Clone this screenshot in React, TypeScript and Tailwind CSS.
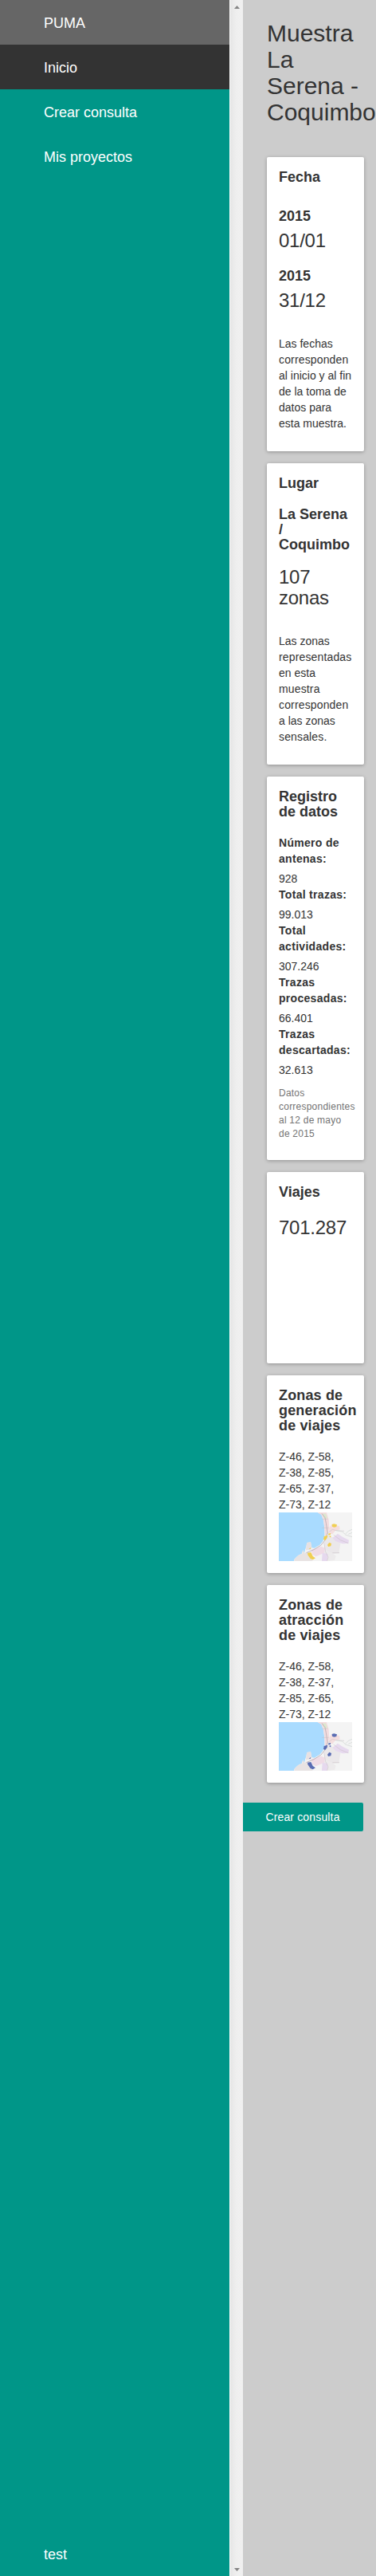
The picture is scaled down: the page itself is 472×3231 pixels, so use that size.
import React from "react";

type LineProps = { children: React.ReactNode; className?: string };

const Line = ({ children, className = "" }: LineProps) => (
  <span className={`block whitespace-nowrap ${className}`}>{children}</span>
);

const Card = ({ children, className = "" }: LineProps) => (
  <section
    className={`w-[122px] rounded-[2px] bg-white p-[15px] shadow-[0_1px_4px_rgba(0,0,0,0.3)] ${className}`}
  >
    {children}
  </section>
);

const Heading = ({ lines, className = "" }: { lines: string[]; className?: string }) => (
  <h4 className={`text-[18px] leading-[19px] font-bold ${className}`}>
    {lines.map((l) => (
      <Line key={l}>{l}</Line>
    ))}
  </h4>
);

const Figure = ({ lines, className = "" }: { lines: string[]; className?: string }) => (
  <p className={`text-[24px] leading-[26px] tracking-[-0.25px] ${className}`}>
    {lines.map((l) => (
      <Line key={l}>{l}</Line>
    ))}
  </p>
);

const Body = ({ lines, className = "" }: { lines: string[]; className?: string }) => (
  <p className={`text-[14px] leading-[20px] ${className}`}>
    {lines.map((l) => (
      <Line key={l} className={l.includes(" ") ? "tracking-normal" : "tracking-[0.15px]"}>
        {l}
      </Line>
    ))}
  </p>
);

const records = [
  { label: ["Número de", "antenas:"], value: "928" },
  { label: ["Total trazas:"], value: "99.013" },
  { label: ["Total", "actividades:"], value: "307.246" },
  { label: ["Trazas", "procesadas:"], value: "66.401" },
  { label: ["Trazas", "descartadas:"], value: "32.613" },
];

const ZoneMap = ({ color }: { color: string }) => (
  <svg className="block h-[61px] w-[92px]" viewBox="0 0 276 183" preserveAspectRatio="none">
    <rect width="276" height="183" fill="#f4f4f4" />
    <path
      d="M0 0H146L160 8L168 30L172 60L172 88L166 108L154 122L134 134L124 133L120 112L106 114L103 130L99 140L96 154L91 142L86 156L76 160L66 168L57 178V183H0Z"
      fill="#a9dbff"
    />
    <path d="M58 183V178L66 168L76 160L88 156L91 142L97 154L108 148L128 183Z" fill="#e8e3e3" />
    <path d="M103 130L106 114L120 111L124 133L120 140L102 142Z" fill="#e8e1e2" />
    <path d="M146 0H180L188 26L190 62L180 88H174L172 55L168 26L160 8Z" fill="#f2dcdf" />
    <path d="M164 6L176 4L183 22L172 24Z" fill="#dce8cf" />
    <path d="M190 58L200 44L228 52L230 64L212 70L202 82L190 80Z" fill="#f4dedf" />
    <path d="M172 108L184 90L204 94L222 100L232 118L226 154L202 156L172 140Z" fill="#ebe8ea" />
    <path d="M172 142L202 154L215 164L210 180L186 183L164 178Z" fill="#edebec" />
    <path d="M122 140L160 128L174 134L171 152L140 166L126 158Z" fill="#f0dce6" />
    <path d="M164 152L184 156L182 183H162Z" fill="#e6d9ee" />
    <path d="M202 96L222 80L240 92L264 104L262 116L240 118L214 108Z" fill="#e6d9ee" />
    <path
      d="M162 4L174 20L178 40L184 78L176 102L158 124L132 140L104 152"
      fill="none"
      stroke="#b9adb3"
      strokeWidth="2.5"
    />
    <path
      d="M162 25H184M162 58H188M178 82L202 64L216 68L246 70M182 92L196 80M170 112L176 148L186 168L182 182M202 152H228M206 84L232 104L262 116"
      fill="none"
      stroke="#c6bdc2"
      strokeWidth="1.5"
    />
    <path
      d="M216 68L238 72L250 82L262 70L276 64M250 84L276 92M262 82L276 76"
      fill="none"
      stroke="#cfd4d1"
      strokeWidth="2"
    />
    <path d="M200 45L208 43L219 46L217 54L208 56L201 53Z" fill={color} />
    <path d="M170 90L183 86L182 96L174 105L168 102Z" fill={color} />
    <path d="M186 80L195 78V84L187 85Z" fill={color} />
    <path d="M191 88L196 88V94L191 93Z" fill={color} />
    <path d="M183 122L190 113L198 117L196 127L186 129Z" fill={color} />
    <path d="M108 152L121 150L128 165L138 172L128 178L119 174L109 160Z" fill={color} />
    <path d="M113 137L121 132L119 138Z" fill={color} />
  </svg>
);

const NavItem = ({ children, className = "" }: LineProps) => (
  <a className={`block h-14 pl-[55px] text-[18px] leading-[58px] text-white ${className}`}>{children}</a>
);

export default function App() {
  return (
    <div className="flex h-[3231px] w-[472px] overflow-hidden bg-[#ccc] font-['Liberation_Sans',Arial,sans-serif] text-[#333]">
      <nav className="flex w-[288px] shrink-0 flex-col bg-[#009688]">
        <NavItem className="bg-[#666]">PUMA</NavItem>
        <NavItem className="bg-[#333]">Inicio</NavItem>
        <NavItem>Crear consulta</NavItem>
        <NavItem>Mis proyectos</NavItem>
        <NavItem className="mt-auto">test</NavItem>
      </nav>

      <div className="flex w-[17px] shrink-0 flex-col items-center justify-between border-l border-white bg-gradient-to-r from-[#e6e6e6] via-[#efefef] to-[#f0f0f0] pt-[7px] pb-[6px]">
        <svg className="h-1 w-[7px]" viewBox="0 0 7 4">
          <path d="M0 4L3.5 0L7 4Z" fill="#858585" />
        </svg>
        <svg className="h-1 w-[7px]" viewBox="0 0 7 4">
          <path d="M0 0L3.5 4L7 0Z" fill="#858585" />
        </svg>
      </div>

      <main className="flex w-[167px] shrink-0 flex-col pt-[25px]">
        <h1 className="ml-[30px] text-[30px] leading-[33px]">
          <Line>Muestra</Line>
          <Line>La</Line>
          <Line>Serena -</Line>
          <Line>Coquimbo</Line>
        </h1>

        <div className="mt-10 ml-[30px] flex flex-col gap-[15px]">
          <Card className="h-[369px] pt-4">
            <Heading lines={["Fecha"]} />
            <Heading className="mt-[30px]" lines={["2015"]} />
            <Figure className="mt-2" lines={["01/01"]} />
            <Heading className="mt-[22px]" lines={["2015"]} />
            <Figure className="mt-2" lines={["31/12"]} />
            <Body
              className="mt-[31px]"
              lines={["Las fechas", "corresponden", "al inicio y al fin", "de la toma de", "datos para", "esta muestra."]}
            />
          </Card>

          <Card className="h-[378px] pt-4">
            <Heading lines={["Lugar"]} />
            <Heading className="mt-5" lines={["La Serena", "/", "Coquimbo"]} />
            <Figure className="mt-[18px]" lines={["107", "zonas"]} />
            <Body
              className="mt-[31px]"
              lines={["Las zonas", "representadas", "en esta", "muestra", "corresponden", "a las zonas", "sensales."]}
            />
          </Card>

          <Card className="h-[481px] pt-4">
            <Heading lines={["Registro", "de datos"]} />
            <dl className="mt-[19px] text-[14px] leading-[20px]">
              {records.map((r) => (
                <div key={r.value}>
                  <dt className="font-bold tracking-[0.3px]">
                    {r.label.map((l) => (
                      <Line key={l}>{l}</Line>
                    ))}
                  </dt>
                  <dd className="mt-[5px]">{r.value}</dd>
                </div>
              ))}
            </dl>
            <p className="mt-[11px] text-[12px] leading-[17px] tracking-[0.23px] text-[#737373]">
              <Line>Datos</Line>
              <Line>correspondientes</Line>
              <Line>al 12 de mayo</Line>
              <Line>de 2015</Line>
            </p>
          </Card>

          <Card className="h-[240px] pt-4">
            <Heading lines={["Viajes"]} />
            <Figure className="mt-[22px]" lines={["701.287"]} />
          </Card>

          <Card className="h-[248px] pt-4">
            <Heading className="tracking-[0.15px]" lines={["Zonas de", "generación", "de viajes"]} />
            <Body className="mt-[19px]" lines={["Z-46, Z-58,", "Z-38, Z-85,", "Z-65, Z-37,", "Z-73, Z-12"]} />
            <ZoneMap color="#f0cf52" />
          </Card>

          <Card className="h-[248px] pt-4">
            <Heading className="tracking-[0.15px]" lines={["Zonas de", "atracción", "de viajes"]} />
            <Body className="mt-[19px]" lines={["Z-46, Z-58,", "Z-38, Z-37,", "Z-85, Z-65,", "Z-73, Z-12"]} />
            <ZoneMap color="#5a6db3" />
          </Card>
        </div>

        <button className="mt-[25px] h-9 w-[151px] rounded-r-[2px] bg-[#009688] pr-px text-center text-[14px] leading-[36px] tracking-[0.15px] text-white">
          Crear consulta
        </button>
      </main>
    </div>
  );
}
